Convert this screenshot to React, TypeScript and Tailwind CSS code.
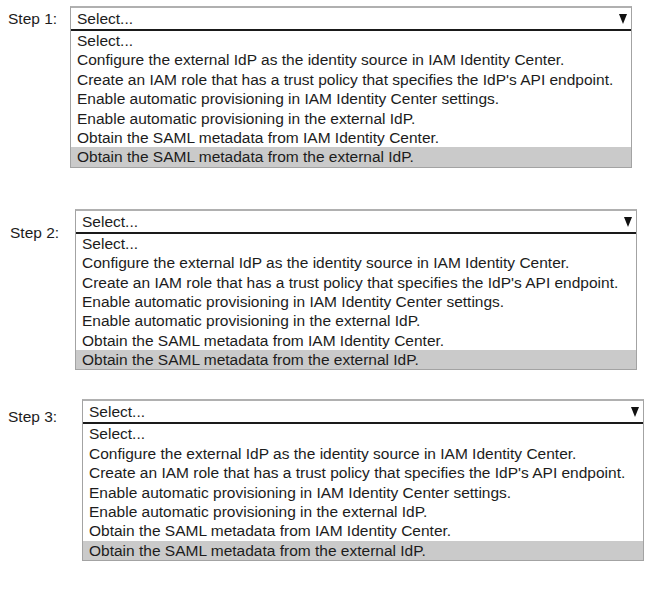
import React from 'react'

const options = [
  'Select...',
  'Configure the external IdP as the identity source in IAM Identity Center.',
  "Create an IAM role that has a trust policy that specifies the IdP's API endpoint.",
  'Enable automatic provisioning in IAM Identity Center settings.',
  'Enable automatic provisioning in the external IdP.',
  'Obtain the SAML metadata from IAM Identity Center.',
  'Obtain the SAML metadata from the external IdP.',
]

type StepProps = {
  label: string
  rowClass: string
  labelClass: string
}

function Caret() {
  return (
    <svg width="8" height="11" viewBox="0 0 8 11" className="shrink-0">
      <polygon points="0,1 8,1 4,11" fill="#111" />
    </svg>
  )
}

function StepSelect({ label, rowClass, labelClass }: StepProps) {
  return (
    <div className={`flex items-start ${rowClass}`}>
      <div className={`shrink-0 text-[15.5px] text-[#1c1c1c] ${labelClass}`}>{label}</div>
      <div className="w-[562px] shrink-0 border border-[#a3a3a3] border-t-2 border-t-[#b0b0b0]">
        {/* closed select */}
        <div className="h-[23px] flex items-center justify-between pl-[6px] pr-[4px] border-b-2 border-[#1a1a1a] bg-white">
          <span className="text-[15.5px] text-[#1c1c1c]">Select...</span>
          <Caret />
        </div>
        {/* open option list */}
        <ul className="bg-white">
          {options.map((opt, i) => (
            <li
              key={i}
              className={`h-[19.4px] leading-[19.4px] pl-[6px] text-[15.5px] text-[#1c1c1c] whitespace-nowrap ${
                i === options.length - 1 ? 'bg-[#cacaca]' : ''
              }`}
            >
              {opt}
            </li>
          ))}
        </ul>
      </div>
    </div>
  )
}

export default function App() {
  return (
    <div className="w-[666px] h-[592px] bg-white font-['Liberation_Sans',Arial,sans-serif] pt-[6px]">
      <StepSelect label="Step 1:" rowClass="pl-[8px]" labelClass="w-[62px] mt-[1px]" />
      <StepSelect label="Step 2:" rowClass="pl-[10px] mt-[41px]" labelClass="w-[65px] mt-[12px]" />
      <StepSelect label="Step 3:" rowClass="pl-[8px] mt-[29px]" labelClass="w-[74px] mt-[6px]" />
    </div>
  )
}
